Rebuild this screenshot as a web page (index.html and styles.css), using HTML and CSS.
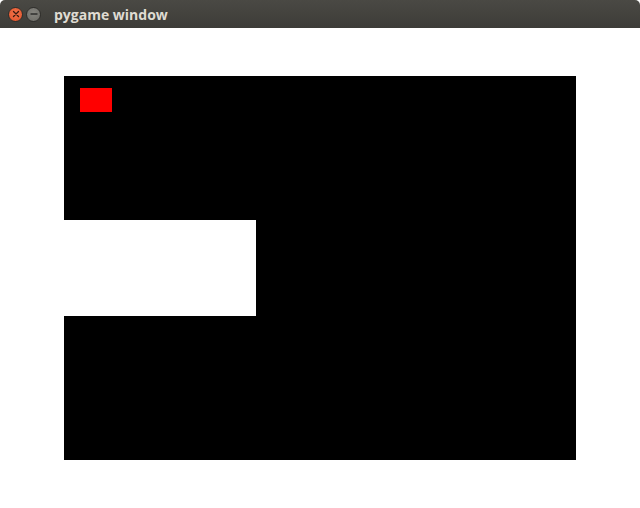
FILE: index.html
```html
<!DOCTYPE html>
<html>
<head>
<meta charset="utf-8">
<link rel="stylesheet" href="styles.css">
</head>
<body>
<div class="window">
  <div class="titlebar">
    <div class="buttons">
      <span class="btn close">
        <svg width="8" height="8" viewBox="0 0 8 8"><path d="M1.5 1.5 L6.5 6.5 M6.5 1.5 L1.5 6.5" stroke="#3a1a10" stroke-width="1.3" stroke-linecap="round"/></svg>
      </span>
      <span class="btn min">
        <svg width="8" height="8" viewBox="0 0 8 8"><path d="M1 4 H7" stroke="#2e2e2c" stroke-width="1.4" stroke-linecap="round"/></svg>
      </span>
    </div>
    <span class="title">pygame window</span>
  </div>
  <div class="canvas">
    <div class="board">
      <div class="top">
        <div class="food"></div>
      </div>
      <div class="middle">
        <div class="hole"></div>
      </div>
      <div class="bottom"></div>
    </div>
  </div>
</div>
</body>
</html>
```
FILE: styles.css
```css
html, body {
  margin: 0;
  padding: 0;
  background: #ffffff;
}
.window {
  width: 640px;
  height: 508px;
  display: flex;
  flex-direction: column;
}
.titlebar {
  height: 28px;
  flex: none;
  display: flex;
  align-items: center;
  background: linear-gradient(#4a4944, #3d3c38);
  border-radius: 5px 5px 0 0;
  box-sizing: border-box;
}
.buttons {
  display: flex;
  gap: 3px;
  padding-left: 8px;
}
.btn {
  width: 15px;
  height: 15px;
  border-radius: 50%;
  display: flex;
  align-items: center;
  justify-content: center;
  box-sizing: border-box;
}
.close {
  background: radial-gradient(circle at 50% 40%, #f2734a, #e0522a);
  border: 1px solid #2f2e2b;
}
.min {
  background: radial-gradient(circle at 50% 40%, #86857f, #6c6b66);
  border: 1px solid #2f2e2b;
}
.title {
  margin-left: 13px;
  font-family: "Open Sans", "DejaVu Sans", sans-serif;
  font-weight: 700;
  font-size: 14px;
  color: #dfdbd2;
  letter-spacing: 0;
}
.canvas {
  flex: 1;
  background: #ffffff;
  padding: 48px 64px 0 64px;
}
.board {
  width: 512px;
  height: 384px;
  display: flex;
  flex-direction: column;
}
.top {
  height: 144px;
  background: #000;
  padding: 12px 0 0 16px;
  box-sizing: border-box;
}
.food {
  width: 32px;
  height: 24px;
  background: #ff0000;
}
.middle {
  height: 96px;
  background: #000;
  display: flex;
}
.hole {
  width: 192px;
  height: 96px;
  background: #fff;
}
.bottom {
  height: 144px;
  background: #000;
}
```
